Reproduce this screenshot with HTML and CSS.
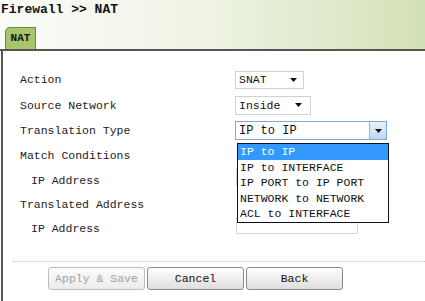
FILE: index.html
```html
<!DOCTYPE html>
<html lang="en">
<head>
  <meta charset="UTF-8">
  <title>Firewall NAT</title>
  <link rel="stylesheet" href="styles.css">
</head>
<body>
  <div class="header">
    <div class="title">Firewall &gt;&gt; NAT</div>
    <div class="tab">NAT</div>
  </div>

  <div class="panel">
    <div class="form">
      <div class="row r25">
        <div class="label">Action</div>
        <div class="select snat">
          <span>SNAT</span>
          <svg class="arrow" width="7" height="4" viewBox="0 0 7 4"><polygon points="0,0 7,0 3.5,4" fill="#111"/></svg>
        </div>
      </div>
      <div class="row r26">
        <div class="label">Source Network</div>
        <div class="select inside">
          <span>Inside</span>
          <svg class="arrow" width="7" height="4" viewBox="0 0 7 4"><polygon points="0,0 7,0 3.5,4" fill="#111"/></svg>
        </div>
      </div>
      <div class="row r25">
        <div class="label">Translation Type</div>
        <div class="select open">
          <span>IP to IP</span>
          <div class="drop-btn">
            <svg width="7" height="4" viewBox="0 0 7 4"><polygon points="0,0 7,0 3.5,4" fill="#111"/></svg>
          </div>
          <ul class="options">
            <li class="selected">IP to IP</li>
            <li>IP to INTERFACE</li>
            <li>IP PORT to IP PORT</li>
            <li>NETWORK to NETWORK</li>
            <li>ACL to INTERFACE</li>
          </ul>
        </div>
      </div>
      <div class="row r25">
        <div class="label">Match Conditions</div>
      </div>
      <div class="row r24">
        <div class="label sub">IP Address</div>
        <div class="input"></div>
      </div>
      <div class="row r24">
        <div class="label">Translated Address</div>
      </div>
      <div class="row r24">
        <div class="label sub">IP Address</div>
        <div class="input"></div>
      </div>
    </div>

    <div class="sep"></div>

    <div class="buttons">
      <button class="btn" disabled>Apply &amp; Save</button>
      <button class="btn">Cancel</button>
      <button class="btn">Back</button>
    </div>
  </div>
</body>
</html>
```

FILE: styles.css
```css
body {
  margin: 0;
  font-family: "Liberation Mono", monospace;
  background: #fff;
  color: #222;
  height: 301px;
  overflow: hidden;
}
.header {
  height: 49px;
  border-bottom: 2px solid #555;
  background: linear-gradient(to right, #fbfcf8 0%, #eef3e4 50%, #d3e1b7 100%);
  display: flex;
  flex-direction: column;
  justify-content: space-between;
}
.title {
  font-weight: bold;
  font-size: 13px;
  line-height: 14px;
  padding: 3px 0 0 1px;
  color: #111;
}
.tab {
  margin-left: 5px;
  width: 31px;
  height: 22px;
  box-sizing: border-box;
  border: 1px solid #6c8a3a;
  border-bottom: none;
  border-top-left-radius: 5px 5px;
  background: #a8c46c;
  font-weight: bold;
  font-size: 11px;
  line-height: 21px;
  text-align: center;
  color: #10180a;
}
.panel {
  margin-left: 1px;
  border-left: 2px solid #555;
  height: 250px;
  padding-top: 16px;
  box-sizing: border-box;
}
.form {
  margin-left: 17px;
}
.row {
  display: flex;
  align-items: center;
  font-size: 11.5px;
}
.r24 { height: 24px; }
.r25 { height: 25px; }
.r26 { height: 26px; }
.label {
  width: 215px;
}
.label.sub {
  padding-left: 11px;
  box-sizing: border-box;
}
.select {
  position: relative;
  display: flex;
  align-items: center;
  box-sizing: border-box;
  border: 1px solid #d0d0d0;
  background: #fff;
  padding-left: 3px;
  color: #111;
}
.select .arrow {
  position: absolute;
  top: 50%;
  margin-top: -2px;
}
.snat {
  width: 69px;
  height: 18px;
}
.snat .arrow { right: 6px; }
.inside {
  width: 76px;
  height: 19px;
}
.inside .arrow { right: 8px; }
.open {
  width: 152px;
  height: 19px;
  border-color: #7fa9d6;
  font-size: 12px;
}
.drop-btn {
  position: absolute;
  right: 0;
  top: 0;
  bottom: 0;
  width: 17px;
  box-sizing: border-box;
  border-left: 1px solid #93b6dc;
  background: linear-gradient(#eaf3fc, #bcd7f1);
  display: flex;
  align-items: center;
  justify-content: center;
}
.options {
  position: absolute;
  left: 1px;
  top: 21px;
  width: 152px;
  box-sizing: border-box;
  margin: 0;
  padding: 0;
  list-style: none;
  border: 1px solid #111;
  background: #fff;
  z-index: 2;
}
.options li {
  height: 15.6px;
  line-height: 15.6px;
  padding-left: 2px;
  font-size: 11.5px;
  color: #111;
  white-space: nowrap;
}
.options li.selected {
  background: #3399ff;
  color: #fff;
}
.input {
  width: 122px;
  height: 17px;
  margin-left: 1px;
  margin-top: -6px;
  box-sizing: border-box;
  border: 1px solid #d6d6d6;
}
.sep {
  margin: 21px 0 0 10px;
  border-top: 1px dotted #c4c4c4;
}
.buttons {
  display: flex;
  gap: 2px;
  margin: 5px 0 0 45px;
}
.btn {
  width: 97px;
  height: 23px;
  padding: 0;
  font-family: "Liberation Mono", monospace;
  font-size: 11.5px;
  color: #111;
  border: 1px solid #8a8a8a;
  border-radius: 3px;
  background: linear-gradient(#fefefe, #dedede);
}
.btn:disabled {
  color: #a0a0a0;
  border-color: #bdbdbd;
  background: linear-gradient(#fbfbfb, #ececec);
}
```
